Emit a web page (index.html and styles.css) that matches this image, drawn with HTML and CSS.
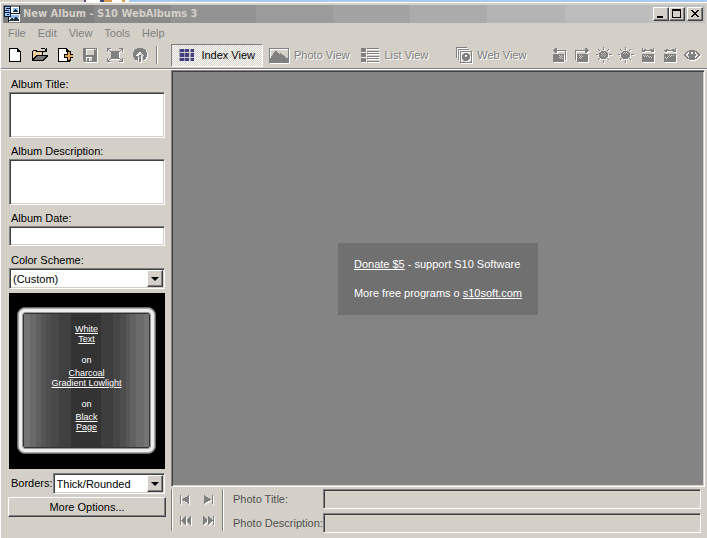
FILE: index.html
```html
<!DOCTYPE html>
<html lang="en">
<head>
<meta charset="utf-8">
<title>New Album - S10 WebAlbums 3</title>
<link rel="stylesheet" href="styles.css">
</head>
<body>
<div class="backdrop"></div>
<div class="window">
  <header class="titlebar">
    <svg class="app-icon" width="16" height="16" viewBox="0 0 16 16"><path fill="#fff" d="M5 1h10v6H5zM4 8h12v8H4z"/><path fill="#8bbcf0" d="M9 2h5v4h-5zM6 9h9v3H6z"/><path fill="#234" d="M5 14h1v-1h1v-1h2v1h1v-1h1v-1h2v1h1v1h1v2H5zM9 6V5h1V4h1V3h1v1h1v1h1v1z"/><path fill="#081830" d="M0 0h7v11H0zM4 7h12v1H4zM15 0h1v8h-1zM4 7h1v9H4z"/><path fill="#9cf" d="M1 1h5v1H2v1h4v3H1V5h4V4H1zM1 7h5v3H1z"/><path fill="#081830" d="M3 8h2v1H3z"/></svg>
    <h1>New Album - S10 WebAlbums 3</h1>
    <div class="caption-buttons">
      <button class="raised" aria-label="Minimize"><svg width="12" height="10" viewBox="0 0 12 10"><path d="M2 7h6v2H2z"/></svg></button>
      <button class="raised" aria-label="Maximize"><svg width="12" height="10" viewBox="0 0 12 10"><path fill-rule="evenodd" d="M1 0h9v9H1zM2 2v6h7V2z"/></svg></button>
      <button class="raised close" aria-label="Close"><svg width="12" height="10" viewBox="0 0 12 10"><path d="M2 1h2v1h1v1h2V2h1V1h2v1H9v1H8v1H7v1h1v1h1v1h1v1H8V7H7V6H5v1H4v1H2V7h1V6h1V5h1V4H4V3H3V2H2z"/></svg></button>
    </div>
  </header>
  <nav class="menubar">
    <button>File</button><button>Edit</button><button>View</button><button>Tools</button><button>Help</button>
  </nav>
  <div class="toolbar">
    <div class="file-tools">
      <button aria-label="New"><svg width="16" height="16" viewBox="0 0 16 16"><path d="M2 1h9v1h1v1h1v1h1v11H2z"/><path fill="#fff" d="M3 2h7v3h3v9H3z"/></svg></button>
      <button aria-label="Open"><svg width="16" height="16" viewBox="0 0 16 16"><path d="M0 4h1V3h4v1h6v4h5v2h-1v1h-1v1h-1v1h-1v1H0zM9 1h4v1H9zM13 2h1v1h-1zM14 1h1v4h-4V4h2V3h1z"/><path fill="#f4c58a" d="M1 4h3v1h6v3H4v1H3v1H2v1H1z"/><path fill="#fff" d="M2 5h1v1H2zM4 6h1v1H4zM6 6h1v1H6zM8 6h1v1H8z"/><path fill="#777" d="M5 9h9v1h-1v1h-1v1h-1v1H2v-1h1v-1h1v-1h1z"/></svg></button>
      <button aria-label="Add photos"><svg width="16" height="16" viewBox="0 0 16 16"><path d="M1 1h9v1h1v1h1v1h1v11H1z"/><path fill="#fff" d="M2 2h7v3h3v9H2z"/><path d="M10 4h4v3h2v4h-2v3h-4v-3H7V7h3z"/><path fill="#e8a557" d="M11 5h2v3h3v2h-3v3h-2v-3H8V8h3z"/></svg></button>
      <button class="off" aria-label="Save"><svg width="16" height="16" viewBox="0 0 16 16"><path fill-rule="evenodd" d="M1 1h14v14H2v-1H1zM4 2v6h8V2zM4 10v4h6v-4zM13 2v1h1V2z"/><path d="M5 11h2v3H5z"/></svg></button>
      <button class="off" aria-label="Resize"><svg width="16" height="16" viewBox="0 0 16 16"><path d="M4 4h8v8H4zM0 1h4v1H2v1h1v1h1v1H3V4H2V3H1v2H0zM12 1h4v4h-1V3h-1v1h-1v1h-1V4h1V3h1V2h-2zM0 11h1v2h1v-1h1v-1h1v1H3v1H2v1h2v1H0zM15 11h1v4h-4v-1h2v-1h-1v-1h-1v-1h1v1h1v1h1z"/></svg></button>
      <button class="off" aria-label="Publish"><svg width="16" height="16" viewBox="0 0 16 16"><path fill-rule="evenodd" d="M5 1h6v1h2v1h1v2h1v5h-1v2h-1v1h-2V9h1V8h-1V7h-1V6H9V5H7v1H6v1H5v1H4v1h2v5H5v-1H3v-1H2v-2H1V5h1V3h1V2h2zM7 8h2v7H7z"/></svg></button>
    </div>
    <div class="divider"></div>
    <div class="view-tools">
      <button class="index active"><svg width="17" height="14" viewBox="0 0 17 14"><path fill="#9c9cbc" d="M0 0h17v14H0z"/><path fill="#d4d0c8" d="M5 0h1v14H5zM11 0h1v14h-1zM0 4h17v1H0zM0 9h17v1H0z"/><path fill="#404080" d="M1 0h4v4H1zM7 0h4v4H7zM13 0h4v4h-4zM1 5h4v4H1zM7 5h4v4H7zM13 5h4v4h-4zM1 10h4v4H1zM7 10h4v4H7zM13 10h4v4h-4z"/></svg><span>Index View</span></button>
      <button class="off photo"><svg width="20" height="15" viewBox="0 0 20 15"><path fill-rule="evenodd" d="M0 0h20v15H0zM1 1v9h1V8h1V7h1V5h1V4h1V3h2v1h1v1h1v1h1V5h1v1h1v1h2v1h1v1h1v1h2V1z"/></svg><span>Photo View</span></button>
      <button class="off list"><svg width="18" height="15" viewBox="0 0 18 15"><path d="M0 0h5v4H0zM0 5h5v4H0zM0 10h5v4H0zM6 0h12v1H6zM6 3h12v1H6zM6 5h12v1H6zM6 8h12v1H6zM6 10h12v1H6zM6 13h12v1H6z"/></svg><span>List View</span></button>
      <button class="off web"><svg width="16" height="16" viewBox="0 0 16 16"><path fill-rule="evenodd" d="M0 0h11v1H1v10H0zM2 2h11v1H3v10H2zM4 4h12v12H4zM5 5v10h10V5zM8 6h4v1h1v1h1v4h-1v1h-1v1H8v-1H7v-1H6V8h1V7h1zM9 8v2h2V8z"/></svg><span>Web View</span></button>
    </div>
    <div class="edit-tools">
      <button class="off" aria-label="Rotate left"><svg width="16" height="16" viewBox="0 0 16 16"><path d="M1 3h1V2h1V1h2v2h9v10h-1V4H5v2H3V5H2V4H1zM1 7h11v8H1z"/><path fill="#d4d0c8" d="M7 8h1v1H7zM9 8h1v1H9zM8 9h1v1H8zM10 9h1v1h-1zM7 10h1v1H7zM9 10h1v1H9zM8 11h1v1H8zM10 11h1v1h-1z"/></svg></button>
      <button class="off" aria-label="Rotate right"><svg width="16" height="16" viewBox="0 0 16 16"><path d="M15 3h-1V2h-1V1h-2v2H1v10h1V4h9v2h2V5h1V4h1zM3 7h11v8H3z"/><path fill="#d4d0c8" d="M5 8h1v1H5zM7 8h1v1H7zM6 9h1v1H6zM8 9h1v1H8zM5 10h1v1H5zM7 10h1v1H7zM6 11h1v1H6z"/></svg></button>
      <button class="off" aria-label="Brighter"><svg width="16" height="16" viewBox="0 0 16 16"><path d="M5 4h5v1h1v1h1v4h-1v1h-1v1H5v-1H4v-1H3V6h1V5h1zM7 0h1v3H7zM7 13h1v3H7zM0 7h2v1H0zM13 7h3v1h-3zM2 2h1v1h1v1H3V3H2zM13 2h-1v1h-1v1h1V3h1zM2 13h1v-1h1v-1H3v1H2zM13 13h-1v-1h-1v-1h1v1h1z"/><path fill="#b4b1ab" d="M6 5h1v1H6zM8 5h1v1H8zM5 6h1v1H5zM7 6h1v1H7zM9 6h1v1H9zM6 7h1v1H6zM8 7h1v1H8zM5 8h1v1H5zM7 8h1v1H7zM9 8h1v1H9zM6 9h1v1H6zM8 9h1v1H8z"/></svg></button>
      <button class="off" aria-label="Contrast"><svg width="16" height="16" viewBox="0 0 16 16"><path d="M5 4h5v1h1v1h1v4h-1v1h-1v1H5v-1H4v-1H3V6h1V5h1zM7 0h1v3H7zM7 13h1v3H7zM0 7h2v1H0zM13 7h3v1h-3zM2 2h1v1h1v1H3V3H2zM13 2h-1v1h-1v1h1V3h1zM2 13h1v-1h1v-1H3v1H2zM13 13h-1v-1h-1v-1h1v1h1z"/><path fill="#d4d0c8" d="M6 5h1v1H6zM8 5h1v1H8zM5 6h1v1H5zM7 6h1v1H7zM9 6h1v1H9z"/></svg></button>
      <button class="off" aria-label="Darken"><svg width="16" height="16" viewBox="0 0 16 16"><path d="M2 7h12v8H2zM2 1h1v2h1V2h2v1h4V2h2v1h1V1h1v4h-3V4H5v1H2z"/><path fill="#d4d0c8" d="M3 8h1v1H3zM5 8h1v1H5zM7 8h1v1H7zM4 9h1v1H4zM6 9h1v1H6zM8 9h1v1H8zM10 9h1v1h-1zM9 10h1v1H9zM11 10h1v1h-1z"/></svg></button>
      <button class="off" aria-label="Lighten"><svg width="16" height="16" viewBox="0 0 16 16"><path d="M2 7h12v8H2zM13 1h1v4h-3V4H5v1H3V4H2V3h2V2h2v1h4V2h2v1h1z"/><path fill="#d4d0c8" d="M12 8h-1v1h1zM10 8H9v1h1zM8 8H7v1h1zM9 9H8v1h1zM7 9H6v1h1zM6 10H5v1h1zM4 10H3v1h1zM5 11H4v1h1z"/></svg></button>
      <button class="off" aria-label="Preview"><svg width="16" height="16" viewBox="0 0 16 16"><path fill-rule="evenodd" d="M5 3h6v1h2v1h1v1h1v1h1v2h-1v1h-1v1h-1v1h-2v1H5v-1H3v-1H2v-1H1V9H0V7h1V6h1V5h1V4h2zM4 5v1H3v1H2v2h1v1h1v1h1V9H4V7h1V5zM11 5v2h1v2h-1v2h1v-1h1V9h1V7h-1V6h-1V5zM7 5v2h2V5z"/></svg></button>
    </div>
  </div>
  <main class="workspace">
    <form class="sidebar">
      <label for="title">Album Title:</label>
      <textarea id="title" class="sunken"></textarea>
      <label for="description">Album Description:</label>
      <textarea id="description" class="sunken"></textarea>
      <label for="date">Album Date:</label>
      <input id="date" class="sunken" type="text">
      <label for="scheme">Color Scheme:</label>
      <div class="combo sunken"><select id="scheme"><option>(Custom)</option></select><span class="arrow raised"></span></div>
      <div class="preview">
        <div class="frame"><div class="swatch">
          <p><a href="#">White<br>Text</a></p>
          <p class="on">on</p>
          <p><a href="#">Charcoal<br>Gradient Lowlight</a></p>
          <p class="on">on</p>
          <p><a href="#">Black<br>Page</a></p>
        </div></div>
      </div>
      <div class="borders">
        <label for="borders">Borders:</label>
        <div class="combo sunken"><select id="borders"><option>Thick/Rounded</option></select><span class="arrow raised"></span></div>
      </div>
      <button type="button" class="more raised">More Options...</button>
    </form>
    <section class="content">
      <div class="canvas sunken">
        <div class="notice">
          <p><a href="#">Donate $5</a> - support S10 Software</p>
          <p class="programs"><span>More free programs o</span><a href="#">s10soft.com</a></p>
        </div>
      </div>
      <footer class="details">
        <div class="navigator">
          <button class="off" aria-label="Previous"><svg width="12" height="9" viewBox="0 0 12 9"><path d="M0 0h1v9H0zM9 0v9H8V8H7V7H5V6H3V5H2V4h1V3h2V2h2V1h1V0z"/></svg></button>
          <button class="off" aria-label="Next"><svg width="12" height="9" viewBox="0 0 12 9"><path d="M1 0h1v1h1v1h2v1h2v1h1v1H7v1H5v1H3v1H2v1H1zM9 0h1v9H9z"/></svg></button>
          <button class="off" aria-label="First"><svg width="12" height="9" viewBox="0 0 12 9"><path d="M0 0h1v9H0zM6 0v9H5V8H4V7H3V6H2V5H1V4h1V3h1V2h1V1h1V0zM11 0v9h-1V8H9V7H8V6H7V3h1V2h1V1h1V0z"/></svg></button>
          <button class="off" aria-label="Last"><svg width="12" height="9" viewBox="0 0 12 9"><path d="M0 0h1v1h1v1h1v1h1v3H3v1H2v1H1v1H0zM5 0h1v1h1v1h1v1h1v1h1v1H9v1H8v1H7v1H6v1H5zM10 0h1v9h-1z"/></svg></button>
        </div>
        <div class="fields">
          <label for="photo-title">Photo Title:</label><input id="photo-title" class="sunken" type="text">
          <label for="photo-desc">Photo Description:</label><input id="photo-desc" class="sunken" type="text">
        </div>
      </footer>
    </section>
  </main>
</div>
</body>
</html>
```
FILE: styles.css
```css
:root {
  --face: #d4d0c8;
  --shadow: #808080;
  --dark: #404040;
}

* { box-sizing: border-box; }

body {
  display: flex;
  flex-direction: column;
  min-height: 100vh;
  margin: 0;
  background: var(--face);
  color: #000;
  font: 11px/14px "Liberation Sans", Arial, sans-serif;
}

h1, p { margin: 0; }
svg { display: block; shape-rendering: crispEdges; }

button {
  margin: 0;
  padding: 0;
  border: 0;
  border-radius: 0;
  background: none;
  color: inherit;
  font: inherit;
}

input, textarea, select {
  display: block;
  width: 100%;
  min-width: 0;
  margin: 0;
  padding: 0;
  border: 0;
  border-radius: 0;
  background: #fff;
  color: #000;
  font: inherit;
}

.sunken {
  border: 1px solid;
  border-color: var(--shadow) #fff #fff var(--shadow);
  box-shadow: inset 1px 1px var(--dark), inset -1px -1px var(--face);
}

.raised {
  border: 1px solid;
  border-color: #fff var(--dark) var(--dark) #fff;
  background: var(--face);
  box-shadow: inset -1px -1px var(--shadow);
}

/* Sliver of the desktop behind the window */
.backdrop {
  height: 2px;
  background: linear-gradient(to right, var(--face) 84px, #604878 84px 86px, #fff 86px 100px, #404880 100px 104px, #d89850 104px 112px, #fff 112px 122px, #e0a050 122px 125px, #fff 125px 129px, #a6caf0 129px);
}

.window {
  display: flex;
  flex: 1;
  flex-direction: column;
  border: solid #fff;
  border-width: 1px 0 0 1px;
}

.titlebar {
  display: flex;
  align-items: center;
  height: 18px;
  margin: 2px 2px 0;
  padding: 0 2px 0 1px;
  background: linear-gradient(to right, #808080 13%, #8a8a8a 13% 24%, #939393 24% 36%, #9b9b9b 36% 47%, #a3a3a3 47% 58%, #ababab 58% 69%, #b4b4b4 69% 80%, #bcbcbc 80% 92%, #c0c0c0 92%);
}

.titlebar h1 {
  flex: 1;
  margin-left: 3px;
  color: var(--face);
  font: bold 11px/18px "DejaVu Sans Condensed", "Noto Sans", sans-serif;
  white-space: nowrap;
}

.caption-buttons { display: flex; }
.caption-buttons button { width: 16px; height: 14px; padding: 1px; }
.caption-buttons .close { margin-left: 2px; }

.menubar {
  display: flex;
  gap: 12px;
  height: 20px;
  padding: 0 7px;
  color: var(--shadow);
}

.toolbar {
  display: flex;
  align-items: center;
  height: 27px;
  padding: 0 7px 2px 6px;
  border-bottom: 1px solid #fff;
  box-shadow: inset 0 -1px var(--shadow);
}

.off { color: var(--shadow); }
.off svg { fill: var(--shadow); filter: drop-shadow(1px 1px 0 #fff); }
.off span { text-shadow: 1px 1px #fff; }

.file-tools { display: flex; gap: 9px; }

.divider {
  width: 2px;
  height: 18px;
  margin: 0 13px 0 8px;
  border-left: 1px solid var(--shadow);
  border-right: 1px solid #fff;
}

.view-tools { display: flex; white-space: nowrap; }

.view-tools button {
  display: flex;
  align-items: center;
  gap: 5px;
  height: 23px;
  padding: 0 6px;
}

.view-tools .index {
  gap: 7px;
  width: 92px;
  padding: 0 7px;
  border: 1px solid;
  border-color: var(--shadow) #fff #fff var(--shadow);
  background: repeating-conic-gradient(#fff 0 25%, var(--face) 0 50%) 0 0 / 2px 2px;
}

.view-tools .web { margin-left: 16px; }

.edit-tools { display: flex; gap: 6px; margin-left: auto; }

.workspace { display: flex; flex: 1; }

.sidebar {
  display: flex;
  flex-direction: column;
  width: 170px;
  padding: 7px 6px 0 8px;
}

.sidebar label { padding-left: 2px; line-height: 15px; }
.sidebar > textarea { height: 46px; margin-bottom: 6px; resize: none; }
.sidebar > input { height: 20px; margin-bottom: 7px; }

.combo { display: flex; height: 21px; padding: 1px; background: #fff; }

.combo select {
  flex: 1;
  padding-left: 2px;
  background: transparent;
  appearance: none;
}

.combo .arrow {
  display: flex;
  flex: none;
  align-items: center;
  justify-content: center;
  width: 16px;
  pointer-events: none;
}

.arrow::before {
  border: solid transparent;
  border-width: 4px 4px 0;
  border-top-color: #000;
  content: "";
}

.preview {
  height: 176px;
  margin: 4px 0;
  padding: 14px 9px 15px 8px;
  background: #000;
}

.frame {
  height: 100%;
  padding: 5px;
  border: 1px solid #666;
  border-radius: 8px;
  background: #eee;
  box-shadow: inset 0 0 0 1px #aaa;
}

.swatch {
  height: 100%;
  padding-top: 10px;
  border: 1px solid #333;
  outline: 1px solid #999;
  border-radius: 2px;
  background: linear-gradient(to right, #737373 5%, #696969 5% 10%, #5f5f5f 10% 14%, #555 14% 18%, #4e4e4e 18% 22%, #484848 22% 28%, #404040 28% 38%, #333 38% 62%, #3e3e3e 62% 71%, #464646 71% 77%, #4e4e4e 77% 82%, #585858 82% 85%, #626262 85% 90%, #6b6b6b 90% 96%, #757575 96%);
  color: #fff;
  font-size: 9px;
  line-height: 10px;
  text-align: center;
}

.swatch .on { padding: 11px 0 3px; }
.swatch a, .notice a { color: #fff; }

.borders { display: flex; align-items: center; }
.borders .combo { flex: 1; }

.more { height: 20px; margin: 3px -1px 0; }

.content { display: flex; flex: 1; flex-direction: column; min-width: 0; }

.canvas {
  display: flex;
  flex: 1;
  align-items: center;
  justify-content: center;
  margin-right: 2px;
  background: #848484;
}

.notice {
  padding: 14px 16px;
  background: #707070;
  color: #fff;
  line-height: 15px;
  white-space: nowrap;
}

.notice p + p { margin-top: 14px; }
.programs { display: flex; gap: 3px; }

.details { display: flex; height: 51px; padding: 2px 6px 5px 0; }

.navigator {
  display: grid;
  grid-template-columns: 23px 23px;
  width: 52px;
  height: 42px;
  padding-left: 8px;
  border-left: 1px solid var(--shadow);
  border-right: 1px solid var(--shadow);
  box-shadow: inset 1px 0 #fff, 1px 0 #fff;
}

.fields {
  display: grid;
  flex: 1;
  grid-template-columns: 90px 1fr;
  grid-template-rows: 20px 20px;
  row-gap: 4px;
  align-items: center;
  margin-left: 10px;
  color: #505050;
  white-space: nowrap;
}

.fields input { height: 20px; background: var(--face); }
```
